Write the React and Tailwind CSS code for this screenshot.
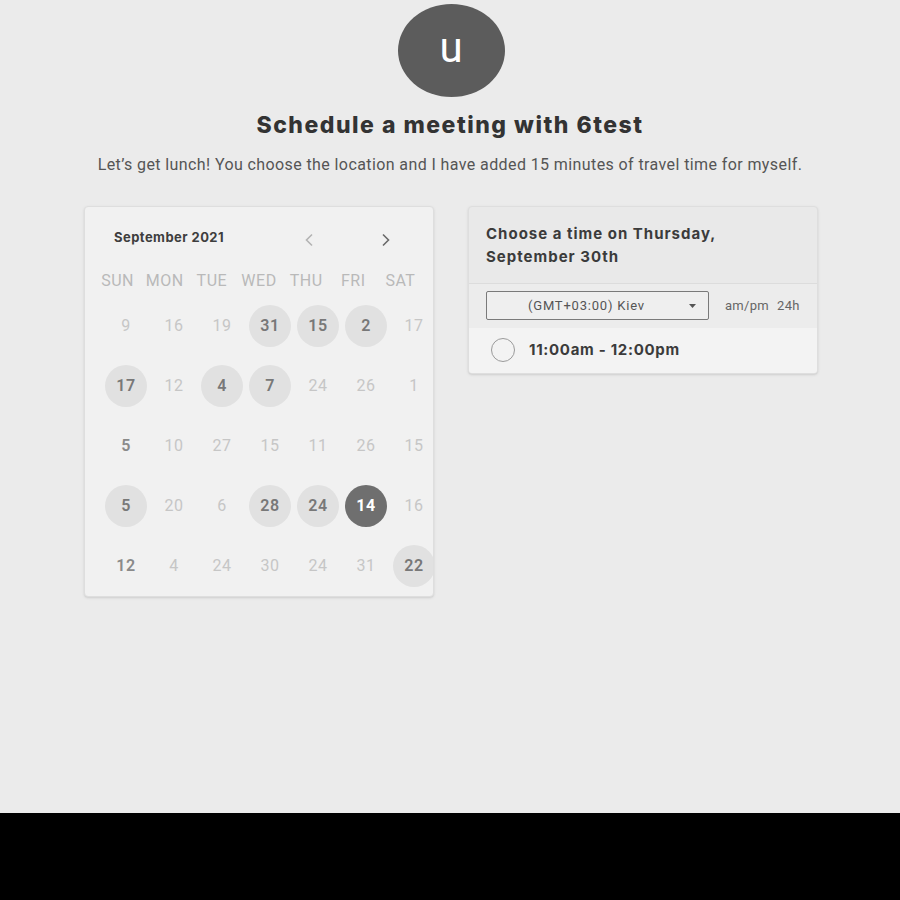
import React from 'react';

const weekdays = ['SUN', 'MON', 'TUE', 'WED', 'THU', 'FRI', 'SAT'];

// t: 0 = unavailable, 1 = available (circle), 2 = bold no circle, 3 = selected
const weeks = [
  [[9, 0], [16, 0], [19, 0], [31, 1], [15, 1], [2, 1], [17, 0]],
  [[17, 1], [12, 0], [4, 1], [7, 1], [24, 0], [26, 0], [1, 0]],
  [[5, 2], [10, 0], [27, 0], [15, 0], [11, 0], [26, 0], [15, 0]],
  [[5, 1], [20, 0], [6, 0], [28, 1], [24, 1], [14, 3], [16, 0]],
  [[12, 2], [4, 0], [24, 0], [30, 0], [24, 0], [31, 0], [22, 1]]
];

function Day({ n, t }) {
  let cls = 'text-[#c6c6c6]';
  if (t === 1) cls = 'bg-[#e1e1e1] text-[#787878] font-semibold';
  if (t === 2) cls = 'text-[#8a8a8a] font-semibold';
  if (t === 3) cls = 'bg-[#6f6f6f] text-white font-bold';
  return (
    <div className="flex h-[60px] items-center justify-center">
      <div className={`flex h-[42px] w-[42px] items-center justify-center rounded-full text-[16px] tracking-[0.5px] ${cls}`}>{n}</div>
    </div>
  );
}

function Calendar() {
  return (
    <div className="h-[391px] w-[350px] overflow-hidden rounded-sm border border-[#dedede] bg-[#f1f1f1] shadow-sm">
      <div className="flex h-[59px] items-start pl-[29px] pr-[42px] pt-[21px]">
        <span className="font-['Inter',sans-serif] text-[13px] font-bold tracking-[0.45px] text-[#3e3e3e]">September 2021</span>
        <div className="ml-auto flex items-center gap-[67px] pt-[5px]">
          <svg width="10" height="14" viewBox="0 0 10 14" fill="none" stroke="#b4b4b4" strokeWidth="1.6"><path d="M8 1.5L2.5 7L8 12.5" /></svg>
          <svg width="10" height="14" viewBox="0 0 10 14" fill="none" stroke="#6a6a6a" strokeWidth="1.6"><path d="M2 1.5L7.5 7L2 12.5" /></svg>
        </div>
      </div>
      <div className="grid h-[30px] grid-cols-7 items-center px-[9px] text-center text-[16px] tracking-[0.5px] text-[#b9b9b9]">
        {weekdays.map((d) => <div key={d}>{d}</div>)}
      </div>
      <div className="pl-[17px]">
        {weeks.map((w, i) => (
          <div key={i} className="grid grid-cols-[repeat(7,48px)]">
            {w.map(([n, t], j) => <Day key={j} n={n} t={t} />)}
          </div>
        ))}
      </div>
    </div>
  );
}

function TimePanel() {
  return (
    <div className="w-[350px] overflow-hidden rounded-sm border border-[#dedede] bg-[#e9e9e9] shadow-sm">
      <div className="h-[77px] border-b border-[#dcdcdc] px-[17px] pt-[15px] font-['Inter',sans-serif] text-[15px] font-bold leading-[23px] tracking-[1px] text-[#3b3b3b]">
        Choose a time on Thursday,<br />September 30th
      </div>
      <div className="flex h-[44px] items-center bg-[#ececec] px-[17px]">
        <div className="flex h-[29px] w-[223px] items-center rounded-[2px] border border-[#7a7a7a] bg-[#efefef] pl-[41px] pr-[12px] text-[13px] tracking-[0.8px] text-[#555]">
          <span>(GMT+03:00) Kiev</span>
          <svg className="ml-auto" width="7" height="4" viewBox="0 0 7 4"><path d="M0 0h7L3.5 4z" fill="#555" /></svg>
        </div>
        <span className="ml-[16px] text-[13px] tracking-[0.3px] text-[#666]">am/pm</span>
        <span className="ml-[8px] text-[13px] tracking-[0.3px] text-[#666]">24h</span>
      </div>
      <div className="flex h-[45px] items-center bg-[#f3f3f3] pl-[22px]">
        <div className="h-[24px] w-[24px] rounded-full border-[1.5px] border-[#9a9a9a]" />
        <span className="ml-[14px] font-['Inter',sans-serif] text-[15px] font-bold tracking-[0.7px] text-[#3b3b3b]">11:00am - 12:00pm</span>
      </div>
    </div>
  );
}

export default function App() {
  return (
    <div className="flex h-[900px] w-[900px] flex-col font-['Roboto',sans-serif]">
      <div className="flex h-[813px] flex-col items-center bg-[#ebebeb]">
        <div className="mt-[4px] ml-[2px] flex h-[93px] w-[107px] items-center justify-center rounded-[50%] bg-[#5c5c5c] pb-[6px] text-[42px] text-white">
          u
        </div>
        <h1 className="mt-[11px] font-['Inter',sans-serif] text-[23px] font-extrabold tracking-[1.5px] text-[#333]">Schedule a meeting with 6test</h1>
        <p className="mt-[10px] text-[16px] tracking-[0.4px] text-[#555]">Let’s get lunch! You choose the location and I have added 15 minutes of travel time for myself.</p>
        <div className="mt-[29px] flex w-full gap-[34px] pl-[84px]">
          <Calendar />
          <div className="self-start">
            <TimePanel />
          </div>
        </div>
      </div>
      <div className="h-[87px] bg-black" />
    </div>
  );
}
